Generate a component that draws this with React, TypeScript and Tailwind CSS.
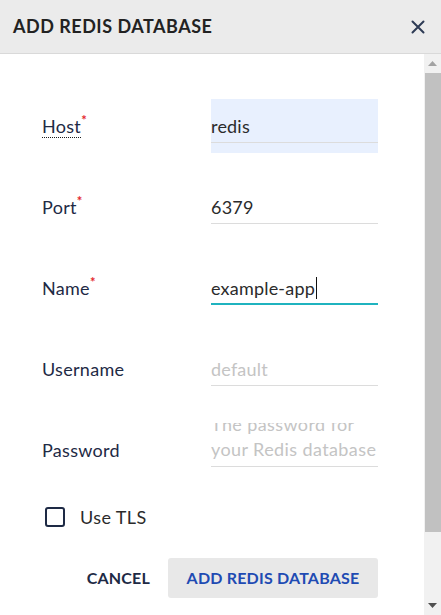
import React from "react";

type Field = {
  label: string;
  required?: boolean;
  hint?: boolean;
  value?: string;
  placeholder?: string;
  autofill?: boolean;
  focused?: boolean;
  multiline?: string[];
};

const fields: Field[] = [
  { label: "Host", required: true, hint: true, value: "redis", autofill: true },
  { label: "Port", required: true, value: "6379" },
  { label: "Name", required: true, value: "example-app", focused: true },
  { label: "Username", placeholder: "default" },
  { label: "Password", multiline: ["The password for", "your Redis database"] },
];

function FieldRow({ f }: { f: Field }) {
  return (
    <div className="grid grid-cols-[169px_167px] h-[81px] items-start">
      {/* label */}
      <div className="pt-[15px] leading-[24px] text-[18px] tracking-[0.3px] text-[#1e2a45]">
        <span
          className={
            f.hint
              ? "inline-block border-b border-dotted border-[#1a1a1a] leading-[22px]"
              : "inline-block leading-[24px]"
          }
        >
          {f.label}
        </span>
        {f.required && (
          <span className="relative -top-[8px] text-[13px] font-bold text-[#e3262b]">*</span>
        )}
      </div>

      {/* input */}
      <div className={f.autofill ? "bg-[#e8f0fe] h-[54px]" : ""}>
        <div
          className={`h-[44px] overflow-hidden text-[18px] tracking-[0.2px] ${
            f.focused ? "border-b-2 border-[#1fb3bf]" : "border-b border-[#dcdcdc]"
          }`}
        >
          {f.multiline ? (
            <div className="-mt-[11px] leading-[25px] text-[#c4c4c4] tracking-[0.4px]">
              {f.multiline.map((l) => (
                <div key={l}>{l}</div>
              ))}
            </div>
          ) : (
            <div className="pt-[15px] leading-[24px] flex items-center">
              {f.value ? (
                <span className="text-[#2b2b2b]">{f.value}</span>
              ) : (
                <span className="text-[#c4c4c4]">{f.placeholder}</span>
              )}
              {f.focused && <span className="ml-[1px] w-px h-[22px] bg-[#111]" />}
            </div>
          )}
        </div>
      </div>
    </div>
  );
}

export default function App() {
  return (
    <div className="w-[441px] h-[615px] flex flex-col bg-white overflow-hidden font-['Lato',sans-serif]">
      {/* Header */}
      <div className="h-[54px] shrink-0 bg-[#ebebeb] border-b border-[#d9d9d9] flex items-center justify-between pl-[13px] pr-[16px]">
        <h2 className="text-[18px] font-bold text-[#222] tracking-[0.5px]">ADD REDIS DATABASE</h2>
        <svg width="14" height="14" viewBox="0 0 14 14" className="text-[#2e3b55]">
          <path d="M1.5 1.5 12.5 12.5M12.5 1.5 1.5 12.5" stroke="currentColor" strokeWidth="2" strokeLinecap="round" />
        </svg>
      </div>

      <div className="flex flex-1 min-h-0">
        {/* Form */}
        <div className="flex-1 pl-[42px] pr-[46px] pt-[45px]">
          {fields.map((f) => (
            <FieldRow key={f.label} f={f} />
          ))}

          <div className="-mt-[37px] pt-[40px] flex items-center gap-[15px] pl-[3px] h-[60px] leading-[20px]">
            <div className="w-[20px] h-[20px] rounded-[3px] border-[2.5px] border-[#1e2a45]" />
            <span className="text-[18px] tracking-[0.4px] text-[#2b2b2b]">Use TLS</span>
          </div>

          <div className="mt-[31px] flex items-center justify-end gap-[18px]">
            <button className="text-[16px] font-bold text-[#1e2a45] tracking-[0.2px]">CANCEL</button>
            <button className="h-[40px] w-[210px] rounded-[3px] bg-[#e8e8e8] text-[16px] font-bold text-[#1f4bb3] tracking-[0.2px]">
              ADD REDIS DATABASE
            </button>
          </div>
        </div>

        {/* Scrollbar */}
        <div className="w-[17px] shrink-0 bg-[#f1f1f1] flex flex-col">
          <div className="h-[19px] flex items-center justify-center">
            <svg width="9" height="5" viewBox="0 0 9 5">
              <path d="M0 5 4.5 0 9 5Z" fill="#a3a3a3" />
            </svg>
          </div>
          <div className="ml-[1px] h-[459px] bg-[#c1c1c1]" />
          <div className="flex-1 flex items-end justify-center pb-[7px]">
            <svg width="9" height="5" viewBox="0 0 9 5">
              <path d="M0 0 4.5 5 9 0Z" fill="#505050" />
            </svg>
          </div>
        </div>
      </div>
    </div>
  );
}
